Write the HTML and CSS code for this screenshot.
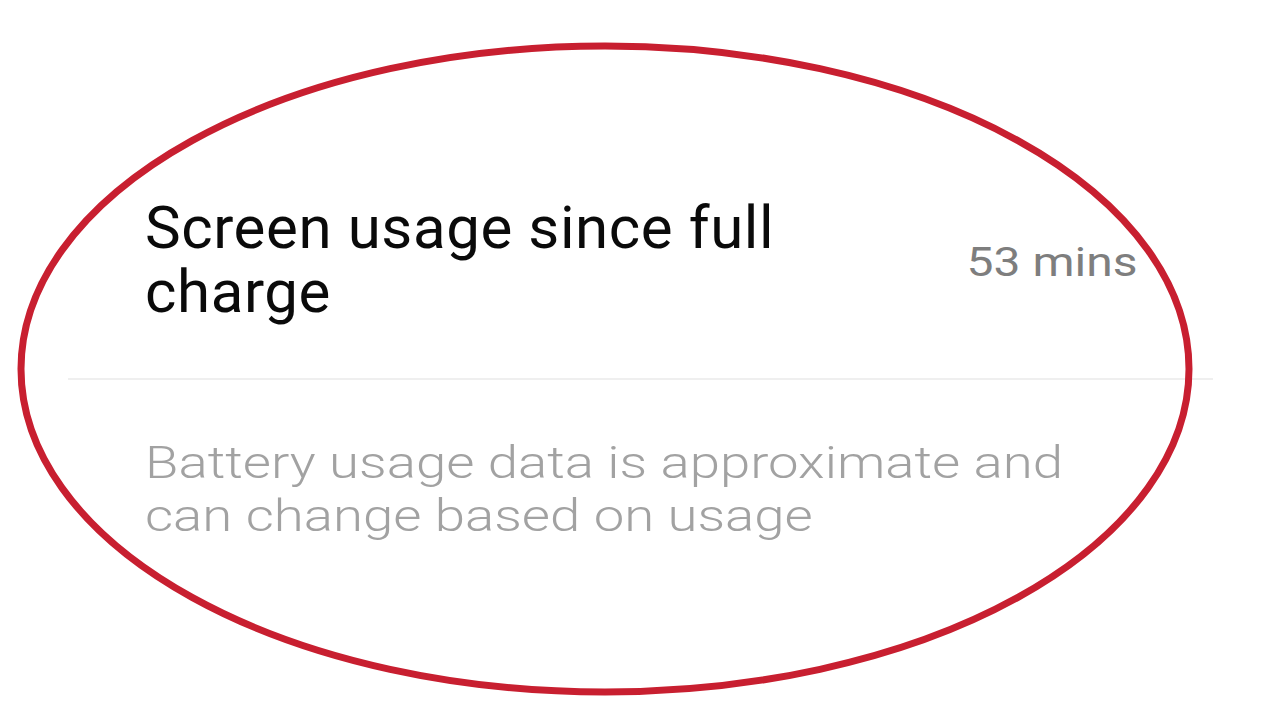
FILE: index.html
```html
<!DOCTYPE html>
<html lang="en">
<head>
<meta charset="utf-8">
<title>Battery usage</title>
<link rel="stylesheet" href="styles.css">
</head>
<body>
<main class="page">
  <section class="list">
    <div class="item">
      <div class="item-title">Screen usage since full charge</div>
      <div class="item-value"><span class="stretch">53 mins</span></div>
    </div>
    <div class="note"><span class="stretch">Battery usage data is approximate and can change based on usage</span></div>
  </section>
  <svg class="highlight" width="1280" height="720" viewBox="0 0 1280 720" aria-hidden="true">
    <ellipse cx="605" cy="369" rx="584" ry="323" fill="none" stroke="#c81f30" stroke-width="7"/>
  </svg>
</main>
</body>
</html>
```

FILE: styles.css
```css
html, body {
  margin: 0;
  padding: 0;
  background: #ffffff;
}

.page {
  position: relative;
  width: 1280px;
  height: 720px;
  overflow: hidden;
  font-family: Roboto, "Liberation Sans", sans-serif;
  padding-top: 196px;
  box-sizing: border-box;
}

.list {
  margin: 0 67px 0 68px;
}

.item {
  display: flex;
  align-items: center;
  justify-content: space-between;
  padding: 0 76px 54px 77px;
  border-bottom: 2px solid #efefef;
}

.item-title {
  width: 700px;
  font-size: 60px;
  line-height: 64px;
  color: #0a0a0a;
  letter-spacing: 0.6px;
}

.item-value {
  font-size: 40px;
  line-height: 48px;
  color: #7e7e7e;
  white-space: nowrap;
  margin-top: 6px;
}

.item-value .stretch {
  display: inline-block;
  transform: scaleX(1.2);
  transform-origin: right center;
}

.note {
  padding: 56px 0 0 77px;
  font-size: 45px;
  font-weight: 300;
  line-height: 53px;
  color: #a2a2a2;
}

.note .stretch {
  display: inline-block;
  width: 780px;
  transform: scaleX(1.212);
  transform-origin: left top;
}

.highlight {
  position: absolute;
  left: 0;
  top: 0;
}
```
